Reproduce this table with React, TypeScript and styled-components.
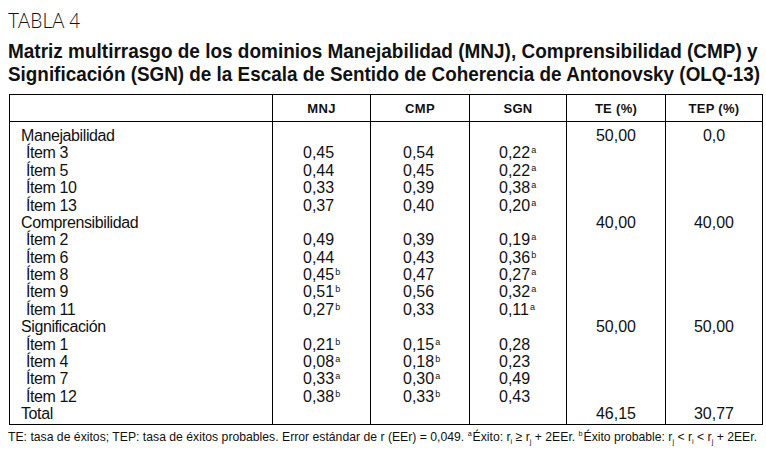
import React, { useLayoutEffect, useRef, useState } from "react";
import styled, { createGlobalStyle } from "styled-components";

const Global = createGlobalStyle`
  html, body { margin: 0; padding: 0; background: #fff; }
  body { font-family: "Liberation Sans", Arial, sans-serif; color: #111; }
`;

const Page = styled.div`
  width: 766px;
  height: 455px;
  box-sizing: border-box;
  padding: 8px 5px 0 8px;
  display: flex;
  flex-direction: column;
  overflow: hidden;
`;

const LineBox = styled.div<{ $size: number; $lh: number; $weight?: number; $family?: string }>`
  font-family: ${(p) => p.$family ?? `"Liberation Sans", Arial, sans-serif`};
  font-size: ${(p) => p.$size}px;
  line-height: ${(p) => p.$lh}px;
  font-weight: ${(p) => p.$weight ?? 400};
  color: #111;
  white-space: nowrap;
  height: ${(p) => p.$lh}px;
`;

const Squeeze = styled.span`
  display: inline-block;
  transform-origin: 0 50%;
`;

function FitLine({
  width,
  size,
  lh,
  weight,
  family,
  children,
}: {
  width: number;
  size: number;
  lh: number;
  weight?: number;
  family?: string;
  children: React.ReactNode;
}) {
  const ref = useRef<HTMLSpanElement>(null);
  const [scale, setScale] = useState(1);
  useLayoutEffect(() => {
    const measure = () => {
      if (ref.current) {
        const w = ref.current.offsetWidth;
        if (w > 0) setScale(width / w);
      }
    };
    measure();
    if ((document as any).fonts?.ready) (document as any).fonts.ready.then(measure);
  }, [width]);
  return (
    <LineBox $size={size} $lh={lh} $weight={weight} $family={family}>
      <Squeeze ref={ref} style={{ transform: `scaleX(${scale})` }}>
        {children}
      </Squeeze>
    </LineBox>
  );
}

const TitleBlock = styled.div`
  margin-top: 8px;
`;

const Table = styled.table`
  margin: 9px 0 0 1px;
  width: 753px;
  border-collapse: collapse;
  table-layout: fixed;
  border: 1px solid #000;
  font-size: 16px;
  color: #111;
`;

const HeadCell = styled.th`
  height: 26px;
  padding: 0;
  font-size: 13px;
  font-weight: bold;
  text-align: center;
  vertical-align: middle;
  border-left: 1px solid #000;
  border-bottom: 1px solid #000;
  letter-spacing: 0.3px;
  &:first-child { border-left: none; }
`;

const Cell = styled.td<{ $align?: "left" | "center"; $indent?: number; $first?: boolean; $last?: boolean; $label?: boolean }>`
  height: 17.375px;
  line-height: 17.375px;
  padding: ${(p) => (p.$first ? "5px" : "0")} 0 ${(p) => (p.$last ? "2px" : "0")} ${(p) => p.$indent ?? 0}px;
  text-align: ${(p) => p.$align ?? "left"};
  vertical-align: top;
  white-space: nowrap;
  letter-spacing: ${(p) => (p.$label ? "-0.4px" : "0")};
  border-left: 1px solid #000;
  &:first-child { border-left: none; }
`;

const Sup = styled.sup`
  font-size: 9px;
  line-height: 0;
  vertical-align: 5px;
  margin-left: 1px;
`;

const NoteSup = styled.sup`
  font-size: 8px;
  line-height: 0;
  vertical-align: 5px;
  margin-right: 1px;
`;

const Sub = styled.sub`
  font-size: 8px;
  line-height: 0;
  vertical-align: -3px;
`;

const FooterBox = styled.div`
  margin-top: 4px;
`;

type Val = string | null;
type Row = { label: string; item?: boolean; v: [Val, Val, Val]; te?: string; tep?: string };

const rows: Row[] = [
  { label: "Manejabilidad", v: [null, null, null], te: "50,00", tep: "0,0" },
  { label: "Ítem 3", item: true, v: ["0,45", "0,54", "0,22a"] },
  { label: "Ítem 5", item: true, v: ["0,44", "0,45", "0,22a"] },
  { label: "Ítem 10", item: true, v: ["0,33", "0,39", "0,38a"] },
  { label: "Ítem 13", item: true, v: ["0,37", "0,40", "0,20a"] },
  { label: "Comprensibilidad", v: [null, null, null], te: "40,00", tep: "40,00" },
  { label: "Ítem 2", item: true, v: ["0,49", "0,39", "0,19a"] },
  { label: "Ítem 6", item: true, v: ["0,44", "0,43", "0,36b"] },
  { label: "Ítem 8", item: true, v: ["0,45b", "0,47", "0,27a"] },
  { label: "Ítem 9", item: true, v: ["0,51b", "0,56", "0,32a"] },
  { label: "Ítem 11", item: true, v: ["0,27b", "0,33", "0,11a"] },
  { label: "Significación", v: [null, null, null], te: "50,00", tep: "50,00" },
  { label: "Ítem 1", item: true, v: ["0,21b", "0,15a", "0,28"] },
  { label: "Ítem 4", item: true, v: ["0,08a", "0,18b", "0,23"] },
  { label: "Ítem 7", item: true, v: ["0,33a", "0,30a", "0,49"] },
  { label: "Ítem 12", item: true, v: ["0,38b", "0,33b", "0,43"] },
  { label: "Total", v: [null, null, null], te: "46,15", tep: "30,77" },
];

const renderVal = (s: Val) => {
  if (!s) return null;
  const m = s.match(/^([\d,]+)([ab]?)$/);
  if (!m) return s;
  return (
    <>
      {m[1]}
      {m[2] && <Sup>{m[2]}</Sup>}
    </>
  );
};

export default function App() {
  return (
    <>
      <Global />
      <Page>
        <FitLine width={72} size={21} lh={23} weight={300} family={`Lato, "Liberation Sans", sans-serif`}>
          TABLA 4
        </FitLine>
        <TitleBlock>
          <FitLine width={750} size={21} lh={23} weight={700}>
            Matriz multirrasgo de los dominios Manejabilidad (MNJ), Comprensibilidad (CMP) y
          </FitLine>
          <FitLine width={752} size={21} lh={23} weight={700}>
            Significación (SGN) de la Escala de Sentido de Coherencia de Antonovsky (OLQ-13)
          </FitLine>
        </TitleBlock>
        <Table>
          <colgroup>
            <col style={{ width: 263 }} />
            <col style={{ width: 98 }} />
            <col style={{ width: 99 }} />
            <col style={{ width: 97 }} />
            <col style={{ width: 99 }} />
            <col style={{ width: 97 }} />
          </colgroup>
          <thead>
            <tr>
              <HeadCell />
              <HeadCell>MNJ</HeadCell>
              <HeadCell>CMP</HeadCell>
              <HeadCell>SGN</HeadCell>
              <HeadCell>TE (%)</HeadCell>
              <HeadCell>TEP (%)</HeadCell>
            </tr>
          </thead>
          <tbody>
            {rows.map((r, i) => {
              const first = i === 0;
              const last = i === rows.length - 1;
              return (
                <tr key={i}>
                  <Cell $label $indent={r.item ? 16 : 11} $first={first} $last={last}>
                    {r.label}
                  </Cell>
                  <Cell $indent={30} $first={first} $last={last}>{renderVal(r.v[0])}</Cell>
                  <Cell $indent={32} $first={first} $last={last}>{renderVal(r.v[1])}</Cell>
                  <Cell $indent={29} $first={first} $last={last}>{renderVal(r.v[2])}</Cell>
                  <Cell $align="center" $first={first} $last={last}>{r.te}</Cell>
                  <Cell $align="center" $first={first} $last={last}>{r.tep}</Cell>
                </tr>
              );
            })}
          </tbody>
        </Table>
        <FooterBox>
          <FitLine width={749} size={13.5} lh={16}>
            TE: tasa de éxitos; TEP: tasa de éxitos probables. Error estándar de r (EEr) = 0,049.{" "}
            <NoteSup>a</NoteSup>Éxito: r<Sub>i</Sub> ≥ r<Sub>j</Sub> + 2EEr. <NoteSup>b</NoteSup>Éxito probable: r
            <Sub>j</Sub> &lt; r<Sub>i</Sub> &lt; r<Sub>j</Sub> + 2EEr.
          </FitLine>
        </FooterBox>
      </Page>
    </>
  );
}
